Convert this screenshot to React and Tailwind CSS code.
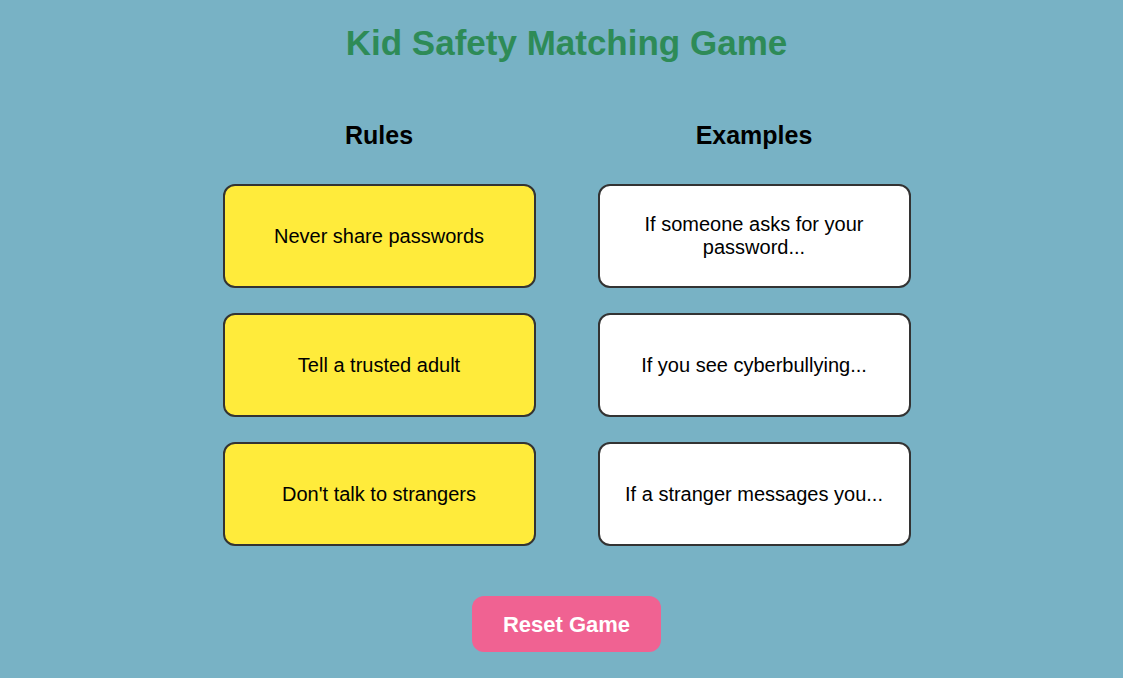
import React from 'react';

const rules = ['Never share passwords', 'Tell a trusted adult', "Don't talk to strangers"];
const examples = ['If someone asks for your password...', 'If you see cyberbullying...', 'If a stranger messages you...'];

function Card({ text, yellow }) {
  return (
    <div
      className={`w-[313px] h-[104px] flex items-center justify-center text-center px-6 rounded-[12px] border-2 border-[#333333] text-[20px] leading-[23px] text-black cursor-pointer ${
        yellow ? 'bg-[#ffeb3b]' : 'bg-white'
      }`}
    >
      {text}
    </div>
  );
}

export default function App() {
  return (
    <div className="min-h-[678px] w-full bg-[#78b2c5] pl-[10px] flex flex-col items-center font-['Liberation_Sans',Arial,sans-serif]">
      <h1 className="mt-[23px] text-[35px] leading-[40px] font-bold text-[#2e8b57]">Kid Safety Matching Game</h1>

      <div className="mt-[58px] flex gap-[62px]">
        <div className="flex flex-col items-center">
          <h2 className="text-[25px] leading-[29px] font-bold text-black">Rules</h2>
          <div className="mt-[34px] flex flex-col gap-[25px]">
            {rules.map((r) => (
              <Card key={r} text={r} yellow />
            ))}
          </div>
        </div>
        <div className="flex flex-col items-center">
          <h2 className="text-[25px] leading-[29px] font-bold text-black">Examples</h2>
          <div className="mt-[34px] flex flex-col gap-[25px]">
            {examples.map((e) => (
              <Card key={e} text={e} />
            ))}
          </div>
        </div>
      </div>

      <button className="mt-[50px] w-[189px] h-[56px] rounded-[12px] bg-[#f06292] text-white text-[22px] font-bold">
        Reset Game
      </button>
    </div>
  );
}
